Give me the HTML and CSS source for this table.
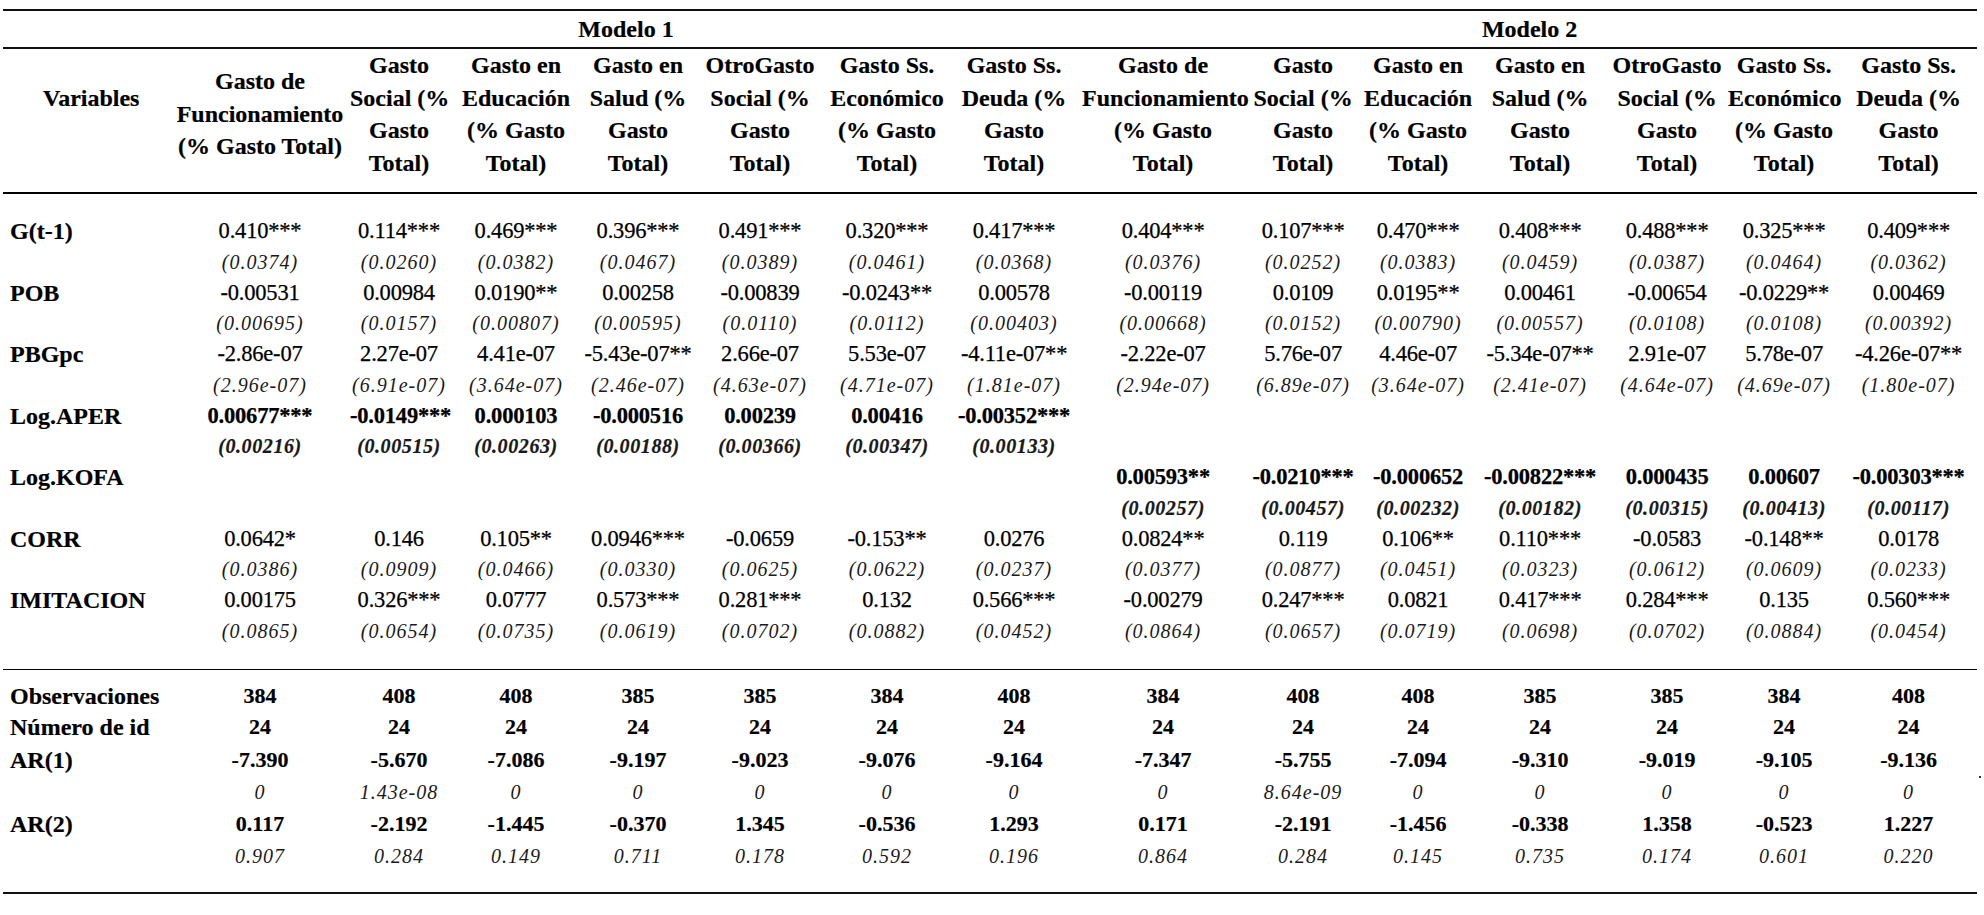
FILE: index.html
```html
<!DOCTYPE html>
<html lang="es">
<head>
<meta charset="utf-8">
<title>Resultados de estimación</title>
<link rel="stylesheet" href="styles.css">
</head>
<body>
<div class="page">
<table class="reg">
<colgroup>
<col class="w-lab"><col class="w1"><col class="w2"><col class="w3"><col class="w4"><col class="w5"><col class="w6"><col class="w7"><col class="w8"><col class="w9"><col class="w10"><col class="w11"><col class="w12"><col class="w13"><col class="w14">
</colgroup>
<thead>
<tr class="models">
<th></th>
<th colspan="7">Modelo 1</th>
<th colspan="7">Modelo 2</th>
</tr>
<tr class="heads">
<th class="var">Variables</th>
<th>Gasto de<br>Funcionamiento<br>(% Gasto Total)</th>
<th>Gasto<br>Social (%<br>Gasto<br>Total)</th>
<th>Gasto en<br>Educación<br>(% Gasto<br>Total)</th>
<th>Gasto en<br>Salud (%<br>Gasto<br>Total)</th>
<th><span class="tight">Otro Gasto</span><br>Social (%<br>Gasto<br>Total)</th>
<th>Gasto Ss.<br>Económico<br>(% Gasto<br>Total)</th>
<th>Gasto Ss.<br>Deuda (%<br>Gasto<br>Total)</th>
<th>Gasto de<br>Funcionamiento<br>(% Gasto<br>Total)</th>
<th>Gasto<br>Social (%<br>Gasto<br>Total)</th>
<th>Gasto en<br>Educación<br>(% Gasto<br>Total)</th>
<th>Gasto en<br>Salud (%<br>Gasto<br>Total)</th>
<th><span class="tight">Otro Gasto</span><br>Social (%<br>Gasto<br>Total)</th>
<th>Gasto Ss.<br>Económico<br>(% Gasto<br>Total)</th>
<th>Gasto Ss.<br>Deuda (%<br>Gasto<br>Total)</th>
</tr>
</thead>
<tbody class="coefs">
<tr class="gap-a"><td colspan="15"></td></tr>
<tr class="coef"><td class="lab">G(t-1)</td><td>0.410***</td><td>0.114***</td><td>0.469***</td><td>0.396***</td><td>0.491***</td><td>0.320***</td><td>0.417***</td><td>0.404***</td><td>0.107***</td><td>0.470***</td><td>0.408***</td><td>0.488***</td><td>0.325***</td><td>0.409***</td></tr>
<tr class="se"><td class="lab"></td><td>(0.0374)</td><td>(0.0260)</td><td>(0.0382)</td><td>(0.0467)</td><td>(0.0389)</td><td>(0.0461)</td><td>(0.0368)</td><td>(0.0376)</td><td>(0.0252)</td><td>(0.0383)</td><td>(0.0459)</td><td>(0.0387)</td><td>(0.0464)</td><td>(0.0362)</td></tr>
<tr class="coef"><td class="lab">POB</td><td>-0.00531</td><td>0.00984</td><td>0.0190**</td><td>0.00258</td><td>-0.00839</td><td>-0.0243**</td><td>0.00578</td><td>-0.00119</td><td>0.0109</td><td>0.0195**</td><td>0.00461</td><td>-0.00654</td><td>-0.0229**</td><td>0.00469</td></tr>
<tr class="se"><td class="lab"></td><td>(0.00695)</td><td>(0.0157)</td><td>(0.00807)</td><td>(0.00595)</td><td>(0.0110)</td><td>(0.0112)</td><td>(0.00403)</td><td>(0.00668)</td><td>(0.0152)</td><td>(0.00790)</td><td>(0.00557)</td><td>(0.0108)</td><td>(0.0108)</td><td>(0.00392)</td></tr>
<tr class="coef"><td class="lab">PBGpc</td><td>-2.86e-07</td><td>2.27e-07</td><td>4.41e-07</td><td>-5.43e-07**</td><td>2.66e-07</td><td>5.53e-07</td><td>-4.11e-07**</td><td>-2.22e-07</td><td>5.76e-07</td><td>4.46e-07</td><td>-5.34e-07**</td><td>2.91e-07</td><td>5.78e-07</td><td>-4.26e-07**</td></tr>
<tr class="se"><td class="lab"></td><td>(2.96e-07)</td><td>(6.91e-07)</td><td>(3.64e-07)</td><td>(2.46e-07)</td><td>(4.63e-07)</td><td>(4.71e-07)</td><td>(1.81e-07)</td><td>(2.94e-07)</td><td>(6.89e-07)</td><td>(3.64e-07)</td><td>(2.41e-07)</td><td>(4.64e-07)</td><td>(4.69e-07)</td><td>(1.80e-07)</td></tr>
<tr class="coef strong"><td class="lab">Log.APER</td><td>0.00677***</td><td>-0.0149***</td><td>0.000103</td><td>-0.000516</td><td>0.00239</td><td>0.00416</td><td>-0.00352***</td><td></td><td></td><td></td><td></td><td></td><td></td><td></td></tr>
<tr class="se strong"><td class="lab"></td><td>(0.00216)</td><td>(0.00515)</td><td>(0.00263)</td><td>(0.00188)</td><td>(0.00366)</td><td>(0.00347)</td><td>(0.00133)</td><td></td><td></td><td></td><td></td><td></td><td></td><td></td></tr>
<tr class="coef strong"><td class="lab">Log.KOFA</td><td></td><td></td><td></td><td></td><td></td><td></td><td></td><td>0.00593**</td><td>-0.0210***</td><td>-0.000652</td><td>-0.00822***</td><td>0.000435</td><td>0.00607</td><td>-0.00303***</td></tr>
<tr class="se strong"><td class="lab"></td><td></td><td></td><td></td><td></td><td></td><td></td><td></td><td>(0.00257)</td><td>(0.00457)</td><td>(0.00232)</td><td>(0.00182)</td><td>(0.00315)</td><td>(0.00413)</td><td>(0.00117)</td></tr>
<tr class="coef"><td class="lab">CORR</td><td>0.0642*</td><td>0.146</td><td>0.105**</td><td>0.0946***</td><td>-0.0659</td><td>-0.153**</td><td>0.0276</td><td>0.0824**</td><td>0.119</td><td>0.106**</td><td>0.110***</td><td>-0.0583</td><td>-0.148**</td><td>0.0178</td></tr>
<tr class="se"><td class="lab"></td><td>(0.0386)</td><td>(0.0909)</td><td>(0.0466)</td><td>(0.0330)</td><td>(0.0625)</td><td>(0.0622)</td><td>(0.0237)</td><td>(0.0377)</td><td>(0.0877)</td><td>(0.0451)</td><td>(0.0323)</td><td>(0.0612)</td><td>(0.0609)</td><td>(0.0233)</td></tr>
<tr class="coef"><td class="lab">IMITACION</td><td>0.00175</td><td>0.326***</td><td>0.0777</td><td>0.573***</td><td>0.281***</td><td>0.132</td><td>0.566***</td><td>-0.00279</td><td>0.247***</td><td>0.0821</td><td>0.417***</td><td>0.284***</td><td>0.135</td><td>0.560***</td></tr>
<tr class="se"><td class="lab"></td><td>(0.0865)</td><td>(0.0654)</td><td>(0.0735)</td><td>(0.0619)</td><td>(0.0702)</td><td>(0.0882)</td><td>(0.0452)</td><td>(0.0864)</td><td>(0.0657)</td><td>(0.0719)</td><td>(0.0698)</td><td>(0.0702)</td><td>(0.0884)</td><td>(0.0454)</td></tr>
<tr class="gap-b"><td colspan="15"></td></tr>
</tbody>
<tbody class="stats">
<tr class="gap-c"><td colspan="15"></td></tr>
<tr class="stat s-obs"><td class="lab">Observaciones</td><td>384</td><td>408</td><td>408</td><td>385</td><td>385</td><td>384</td><td>408</td><td>384</td><td>408</td><td>408</td><td>385</td><td>385</td><td>384</td><td>408</td></tr>
<tr class="stat s-id"><td class="lab">Número de id</td><td>24</td><td>24</td><td>24</td><td>24</td><td>24</td><td>24</td><td>24</td><td>24</td><td>24</td><td>24</td><td>24</td><td>24</td><td>24</td><td>24</td></tr>
<tr class="stat s-ar1"><td class="lab">AR(1)</td><td>-7.390</td><td>-5.670</td><td>-7.086</td><td>-9.197</td><td>-9.023</td><td>-9.076</td><td>-9.164</td><td>-7.347</td><td>-5.755</td><td>-7.094</td><td>-9.310</td><td>-9.019</td><td>-9.105</td><td>-9.136</td></tr>
<tr class="pv p1"><td class="lab"></td><td>0</td><td>1.43e-08</td><td>0</td><td>0</td><td>0</td><td>0</td><td>0</td><td>0</td><td>8.64e-09</td><td>0</td><td>0</td><td>0</td><td>0</td><td>0</td></tr>
<tr class="stat s-ar2"><td class="lab">AR(2)</td><td>0.117</td><td>-2.192</td><td>-1.445</td><td>-0.370</td><td>1.345</td><td>-0.536</td><td>1.293</td><td>0.171</td><td>-2.191</td><td>-1.456</td><td>-0.338</td><td>1.358</td><td>-0.523</td><td>1.227</td></tr>
<tr class="pv p2"><td class="lab"></td><td>0.907</td><td>0.284</td><td>0.149</td><td>0.711</td><td>0.178</td><td>0.592</td><td>0.196</td><td>0.864</td><td>0.284</td><td>0.145</td><td>0.735</td><td>0.174</td><td>0.601</td><td>0.220</td></tr>
<tr class="gap-d"><td colspan="15"></td></tr>
</tbody>
</table>
<span class="stray-dot"></span>
</div>
</body>
</html>
```

FILE: styles.css
```css
html, body {
  margin: 0;
  padding: 0;
  background: #ffffff;
}

.page {
  position: relative;
  width: 1984px;
  height: 915px;
  padding-top: 9px;
  box-sizing: border-box;
  font-family: "Liberation Serif", "Times New Roman", serif;
  color: #000;
}

.reg {
  margin-left: 3px;
  width: 1974px;
  table-layout: fixed;
  border-collapse: collapse;
  border-spacing: 0;
}

.w-lab { width: 167px; }
.w1 { width: 180px; }
.w2 { width: 98px; }
.w3 { width: 136px; }
.w4 { width: 108px; }
.w5 { width: 136px; }
.w6 { width: 118px; }
.w7 { width: 136px; }
.w8 { width: 162px; }
.w9 { width: 118px; }
.w10 { width: 112px; }
.w11 { width: 132px; }
.w12 { width: 122px; }
.w13 { width: 112px; }
.w14 { width: 137px; }

.reg th,
.reg td {
  padding: 0;
  text-align: center;
  vertical-align: middle;
  white-space: nowrap;
}

/* top header band */
.models th {
  height: 36px;
  border-top: 2px solid #111;
  border-bottom: 2px solid #111;
  font-weight: bold;
  font-size: 24px;
  line-height: 28px;
  -webkit-text-stroke: 0.2px #000;
}

.heads th {
  font-weight: bold;
  font-size: 24px;
  line-height: 32.5px;
  padding-bottom: 13px;
  border-bottom: 2px solid #000;
  -webkit-text-stroke: 0.2px #000;
}

.heads th.var {
  text-align: left;
  padding-left: 40px;
  padding-bottom: 45.5px;
}

.tight {
  word-spacing: -6px;
}

/* body rows */
.reg td.lab {
  text-align: left;
  padding-left: 7px;
  font-weight: bold;
  font-size: 24px;
  letter-spacing: 0;
  -webkit-text-stroke: 0.2px #000;
}

.coef td {
  height: 30px;
  font-size: 22.5px;
  line-height: 26px;
  letter-spacing: -0.2px;
  -webkit-text-stroke: 0.25px #000;
}

.se td {
  height: 31.5px;
  font-size: 20px;
  line-height: 24px;
  font-style: italic;
  letter-spacing: 1px;
  color: #1a1a1a;
}

.coef.strong td,
.se.strong td {
  font-weight: bold;
}

.se.strong td {
  letter-spacing: 0.6px;
  -webkit-text-stroke: 0.2px #000;
}

.gap-a td { height: 22px; }
.gap-b td {
  height: 22.5px;
  border-bottom: 1px solid #000;
}
.gap-c td { height: 10px; }
.gap-d td {
  height: 21px;
  border-bottom: 2px solid #111;
}

.stat td {
  font-size: 22px;
  line-height: 26px;
  font-weight: bold;
  -webkit-text-stroke: 0.2px #000;
}

.s-obs td { height: 31px; }
.s-id td { height: 32px; }
.s-ar1 td { height: 33px; }
.p1 td { height: 32px; }
.s-ar2 td { height: 32px; }
.p2 td { height: 31px; }

.pv td {
  font-size: 20px;
  line-height: 24px;
  font-style: italic;
  letter-spacing: 1px;
  color: #1a1a1a;
}

.stray-dot {
  position: absolute;
  left: 1979px;
  top: 776px;
  width: 2px;
  height: 2px;
  background: #333;
}
```
